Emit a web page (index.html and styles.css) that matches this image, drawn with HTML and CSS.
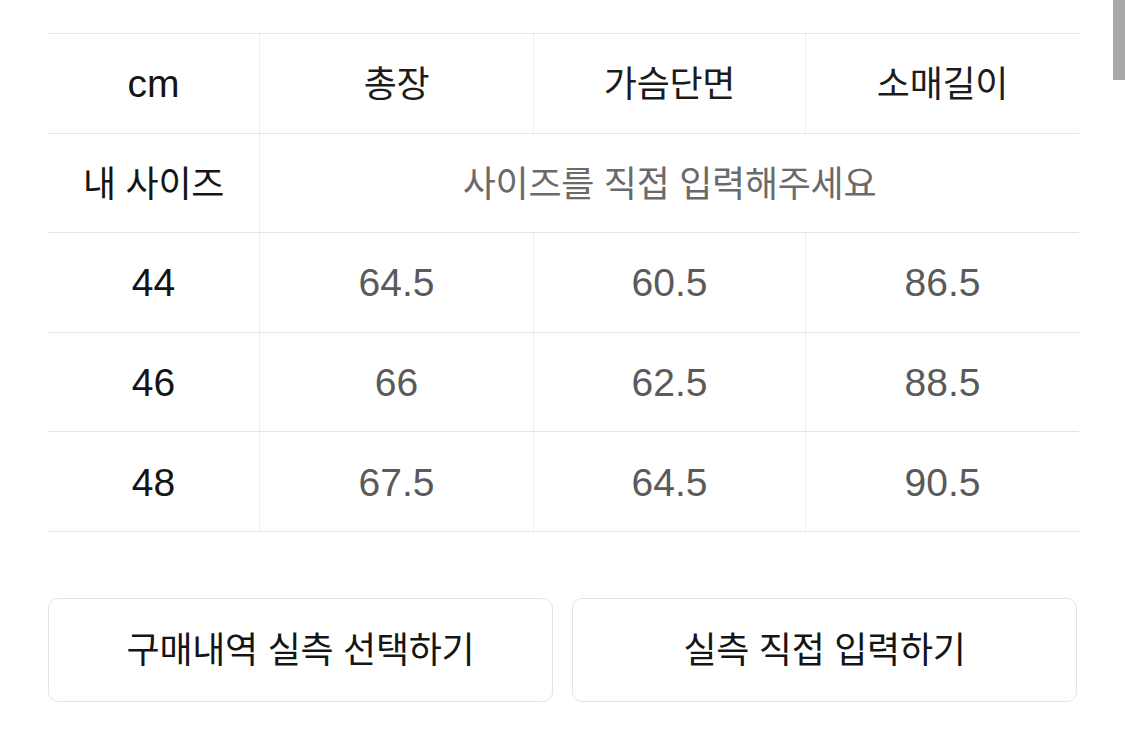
FILE: index.html
```html
<!DOCTYPE html>
<html lang="ko">
<head>
<meta charset="utf-8">
<link rel="stylesheet" href="styles.css">
</head>
<body>
<div class="page">
  <div class="size-table">
    <div class="row">
      <div class="cell label num">cm</div>
      <div class="cell head">총장</div>
      <div class="cell head">가슴단면</div>
      <div class="cell head">소매길이</div>
    </div>
    <div class="row">
      <div class="cell label">내 사이즈</div>
      <div class="cell hint span3">사이즈를 직접 입력해주세요</div>
    </div>
    <div class="row">
      <div class="cell label num">44</div>
      <div class="cell val num">64.5</div>
      <div class="cell val num">60.5</div>
      <div class="cell val num">86.5</div>
    </div>
    <div class="row">
      <div class="cell label num">46</div>
      <div class="cell val num">66</div>
      <div class="cell val num">62.5</div>
      <div class="cell val num">88.5</div>
    </div>
    <div class="row">
      <div class="cell label num">48</div>
      <div class="cell val num">67.5</div>
      <div class="cell val num">64.5</div>
      <div class="cell val num">90.5</div>
    </div>
  </div>
  <div class="actions">
    <button class="btn">구매내역 실측 선택하기</button>
    <button class="btn">실측 직접 입력하기</button>
  </div>
</div>
<div class="scrollbar"></div>
</body>
</html>
```

FILE: styles.css
```css
html, body {
  margin: 0;
  padding: 0;
  background: #ffffff;
}
body {
  width: 1125px;
  height: 738px;
  overflow: hidden;
  position: relative;
  font-family: "Noto Sans CJK KR", sans-serif;
}
.page {
  padding: 33px 46px 0 48px;
}
.size-table {
  width: 1031px;
  border-top: 1px solid #e6e6e6;
}
.row {
  display: grid;
  grid-template-columns: 211px 274px 272px 274px;
  height: 99.6px;
  box-sizing: border-box;
  border-bottom: 1px solid #e6e6e6;
}
.cell {
  display: flex;
  align-items: center;
  justify-content: center;
  font-size: 36px;
  border-left: 1px solid #eeeeee;
  letter-spacing: -0.3px;
  padding-bottom: 4px;
}
.cell:first-child {
  border-left: none;
}
.num {
  font-family: "Liberation Sans", Arial, sans-serif;
  font-size: 39px;
  letter-spacing: 0;
  padding-top: 2px;
  padding-bottom: 0;
}
.label {
  color: #141414;
}
.head {
  color: #1c1c1c;
}
.val {
  color: #5a5a5a;
}
.hint {
  color: #6a6a6a;
}
.span3 {
  grid-column: span 3;
}
.actions {
  display: flex;
  gap: 19px;
  margin-top: 66px;
  width: 1029px;
}
.btn {
  flex: 1;
  height: 104px;
  background: #ffffff;
  border: 1px solid #e4e4e4;
  border-radius: 10px;
  font-family: "Noto Sans CJK KR", sans-serif;
  font-size: 36px;
  letter-spacing: -0.3px;
  color: #151515;
  padding: 0 0 5px 0;
}
.scrollbar {
  position: absolute;
  top: 0;
  right: 0;
  width: 12px;
  height: 80px;
  background: #a9a9a9;
}
```
